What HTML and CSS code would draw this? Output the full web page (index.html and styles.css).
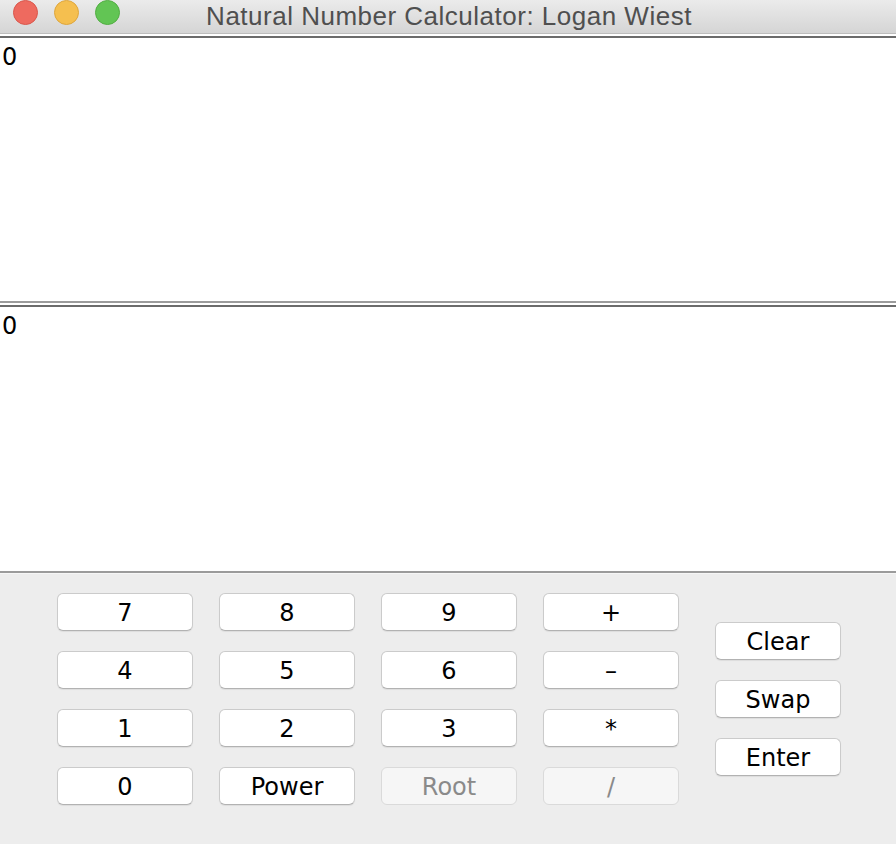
FILE: index.html
```html
<!DOCTYPE html>
<html>
<head>
<meta charset="utf-8">
<title>Natural Number Calculator</title>
<link rel="stylesheet" href="styles.css">
</head>
<body>
<div class="window">
  <div class="titlebar">
    <div class="lights">
      <span class="light red"></span>
      <span class="light yellow"></span>
      <span class="light green"></span>
    </div>
    <div class="title">Natural Number Calculator: Logan Wiest</div>
  </div>
  <div class="display first"><span class="value">0</span></div>
  <div class="display second"><span class="value">0</span></div>
  <div class="panel">
    <div class="keys">
      <button class="btn">7</button>
      <button class="btn">8</button>
      <button class="btn">9</button>
      <button class="btn">+</button>
      <button class="btn">4</button>
      <button class="btn">5</button>
      <button class="btn">6</button>
      <button class="btn">&ndash;</button>
      <button class="btn">1</button>
      <button class="btn">2</button>
      <button class="btn">3</button>
      <button class="btn">*</button>
      <button class="btn">0</button>
      <button class="btn">Power</button>
      <button class="btn disabled">Root</button>
      <button class="btn disabled">/</button>
    </div>
    <div class="actions">
      <button class="btn">Clear</button>
      <button class="btn">Swap</button>
      <button class="btn">Enter</button>
    </div>
  </div>
</div>
</body>
</html>
```

FILE: styles.css
```css
html, body {
  margin: 0;
  padding: 0;
  background: #ffffff;
}

.window {
  width: 896px;
  height: 844px;
  display: flex;
  flex-direction: column;
  overflow: hidden;
  font-family: "DejaVu Sans", "Liberation Sans", sans-serif;
}

.titlebar {
  height: 33px;
  flex: none;
  display: flex;
  align-items: center;
  position: relative;
  background: linear-gradient(#ebebeb, #d5d5d5);
  border-bottom: 1px solid #bdbdbd;
}

.lights {
  display: flex;
  gap: 16px;
  padding-left: 13px;
  position: absolute;
  left: 0;
  top: 0;
}

.light {
  width: 23px;
  height: 23px;
  border-radius: 50%;
  display: block;
}

.red { background: #ee6a5f; border: 1px solid #d9574c; }
.yellow { background: #f5bf4f; border: 1px solid #dea63d; }
.green { background: #62c554; border: 1px solid #52ae43; }

.title {
  flex: 1;
  text-align: center;
  font-family: "Liberation Sans", Arial, sans-serif;
  font-size: 26px;
  letter-spacing: 0.5px;
  color: #4f4f4f;
  line-height: 33px;
  padding-left: 2px;
}

.display {
  flex: none;
  background: #ffffff;
  border-top: 2px solid #6b6b6b;
  border-bottom: 2px solid #9b9b9b;
  box-sizing: border-box;
  padding: 5px 0 0 2px;
}

.display.first {
  margin-top: 2px;
  height: 267px;
}

.display.second {
  margin-top: 2px;
  height: 268px;
}

.value {
  font-size: 24px;
  line-height: 28px;
  color: #000000;
}

.panel {
  flex: 1;
  background: #ededed;
  border-top: 1px solid #f6f6f6;
  display: flex;
  align-items: center;
  padding: 0 0 20px 57px;
  gap: 36px;
}

.keys {
  display: grid;
  grid-template-columns: repeat(4, 136px);
  grid-auto-rows: 38px;
  column-gap: 26px;
  row-gap: 20px;
}

.actions {
  display: flex;
  flex-direction: column;
  gap: 20px;
  width: 126px;
}

.btn {
  height: 38px;
  box-sizing: border-box;
  background: #ffffff;
  border: 1px solid #cbcbcb;
  border-bottom-color: #b2b2b2;
  border-radius: 6px;
  box-shadow: 0 1px 1px rgba(0, 0, 0, 0.07);
  font-family: "DejaVu Sans", "Liberation Sans", sans-serif;
  font-size: 24px;
  color: #000000;
  padding: 2px 0 0 0;
  line-height: 34px;
  text-align: center;
}

.btn.disabled {
  background: #f6f6f6;
  border-color: #dadada;
  color: #8a8a8a;
  box-shadow: none;
}
```
